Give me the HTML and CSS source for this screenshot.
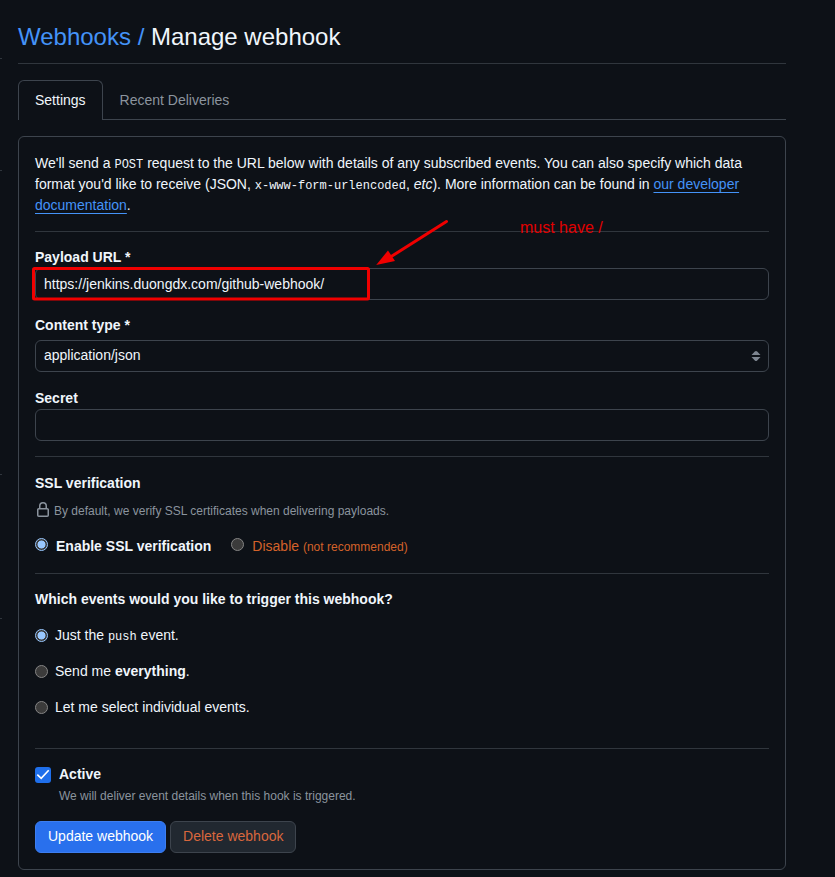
FILE: index.html
```html
<!DOCTYPE html>
<html lang="en">
<head>
<meta charset="utf-8">
<title>Manage webhook</title>
<link rel="stylesheet" href="styles.css">
</head>
<body>
<div class="nav-dividers"><i></i><i></i><i></i><i></i></div>
<main class="page">
  <h1 class="title"><a href="#">Webhooks /</a> Manage webhook</h1>
  <nav class="tabs"><a class="tab active" href="#">Settings</a><a class="tab" href="#">Recent Deliveries</a></nav>
  <form class="box">
    <p class="intro">We'll send a <code>POST</code> request to the URL below with details of any subscribed events. You can also specify which data format you'd like to receive (JSON, <code>x-www-form-urlencoded</code>, <em>etc</em>). More information can be found in <a href="#">our developer documentation</a>.</p>
    <hr>
    <div class="field">
      <label class="label" for="url">Payload URL *</label>
      <input class="control" id="url" type="text" value="https://jenkins.duongdx.com/github-webhook/">
    </div>
    <div class="field select-field">
      <label class="label">Content type *</label>
      <div class="control select"><span>application/json</span>
        <svg width="10" height="10" viewBox="0 0 10 10"><path d="M.5 4h9L6.2.5Q5 -.5 3.800.5zM.5 6h9L6.200 9.500Q5 10.500 3.800 9.500z"/></svg>
      </div>
    </div>
    <div class="field">
      <label class="label" for="secret">Secret</label>
      <input class="control" id="secret" type="text">
    </div>
    <hr>
    <section class="ssl">
      <h2 class="label">SSL verification</h2>
      <p class="note lock-note"><svg width="16" height="16" viewBox="0 0 16 16"><path d="M4 4a4 4 0 0 1 8 0v2h.25c.966 0 1.750.784 1.750 1.750v5.500A1.750 1.750 0 0 1 12.250 15h-8.500A1.750 1.750 0 0 1 2 13.250v-5.500C2 6.784 2.784 6 3.750 6H4Zm8.250 3.500h-8.500a.25.25 0 0 0-.25.25v5.500c0 .138.112.25.25.25h8.500a.25.25 0 0 0 .25-.25v-5.500a.25.25 0 0 0-.25-.25ZM10.500 6V4a2.500 2.500 0 1 0-5 0v2Z"/></svg><span>By default, we verify SSL certificates when delivering payloads.</span></p>
      <div class="ssl-options">
        <span class="radio on"></span><b>Enable SSL verification</b>
        <span class="radio off-gap"></span><span class="danger">Disable <small>(not recommended)</small></span>
      </div>
    </section>
    <hr>
    <section class="events">
      <h2 class="label">Which events would you like to trigger this webhook?</h2>
      <div class="event"><span class="radio on"></span><span>Just the <code>push</code> event.</span></div>
      <div class="event"><span class="radio"></span><span>Send me <b>everything</b>.</span></div>
      <div class="event"><span class="radio"></span><span>Let me select individual events.</span></div>
    </section>
    <hr>
    <section class="active-row">
      <span class="checkbox"><svg width="16" height="16" viewBox="0 0 16 16"><path d="M2.300 7.700 6.200 11.400 13.700 3.300"/></svg></span>
      <div><div class="label">Active</div><p class="note">We will deliver event details when this hook is triggered.</p></div>
    </section>
    <div class="buttons"><button type="button" class="btn primary">Update webhook</button><button type="button" class="btn delete">Delete webhook</button></div>
  </form>
</main>
<svg class="annotation" width="430" height="90" viewBox="0 0 430 90">
  <rect x="3.500" y="53.500" width="335" height="30.500" rx="1"/>
  <path d="M416.500 6.500 362 41"/>
  <path class="head" d="M346.200 50 358 35.500 365 46z"/>
</svg>
<span class="annotation-text">must have /</span>
</body>
</html>
```
FILE: styles.css
```css
* { box-sizing: border-box; }
body {
  margin: 0;
  height: 877px;
  overflow: hidden;
  position: relative;
  background: #0d1117;
  color: #f0f6fc;
  font: 14px/21px "Liberation Sans", Arial, sans-serif;
}
a { color: #4493f8; text-decoration: none; }
p, h1, h2 { margin: 0; }
code { font: 12px "Liberation Mono", monospace; }
hr { height: 1px; border: 0; margin: 15px 0; background: #30363d; }

.page { width: 768px; margin-left: 18px; padding-top: 19px; }
.title {
  font-size: 24px;
  line-height: 36px;
  font-weight: 400;
  padding-bottom: 8px;
  border-bottom: 1px solid #30363d;
  margin-bottom: 16px;
}
.tabs { display: flex; height: 40px; border-bottom: 1px solid #3d444d; margin-bottom: 16px; }
.tab { height: 40px; padding: 10px 17px; color: #8b949e; }
.tab.active {
  padding: 9px 16px;
  border: 1px solid #3d444d;
  border-bottom: 0;
  border-radius: 6px 6px 0 0;
  background: #0d1117;
  color: #f0f6fc;
}
.box { height: 734px; padding: 16px; border: 1px solid #3d444d; border-radius: 6px; }
.intro a { text-decoration: underline; text-underline-offset: 3px; }

.field { margin-bottom: 15px; }
.label { display: block; font-size: 14px; line-height: 21px; font-weight: 700; }
.control {
  display: block;
  width: 100%;
  height: 32px;
  padding: 5px 8px;
  border: 1px solid #3d444d;
  border-radius: 6px;
  background: #0d1117;
  color: #f0f6fc;
  font: 14px/20px "Liberation Sans", Arial, sans-serif;
}
.select-field { margin-bottom: 16px; }
.select { margin-top: 4px; display: flex; justify-content: space-between; padding: 4px 7px 4px 8px; }
.select svg { margin-top: 6px; fill: #7d8590; }

.note { font-size: 12px; line-height: 18px; color: #8b949e; }
.ssl { padding-top: 1px; }
.lock-note { display: flex; margin-top: 7px; }
.lock-note svg { margin-top: 1px; fill: #8b949e; }
.lock-note span { margin: 1px 0 0 3px; }
.ssl-options { display: flex; height: 22px; margin-top: 15px; padding-top: 1px; margin-bottom: 16px; }
.radio {
  flex: none;
  width: 13px;
  height: 13px;
  border: 1px solid #858585;
  border-radius: 50%;
  background: #3b3b3b;
}
.radio.on { border-color: #99c8ff; background: radial-gradient(circle, #99c8ff 0 3.700px, #3b3b3b 4.300px); }
.ssl-options .radio { margin: 2px 8px 0 0; }
.ssl-options .off-gap { margin-left: 20px; }
.danger { color: #d4622a; }
.danger small { font-size: 12px; }
.event { display: flex; height: 21px; margin-top: 15px; }
.event .radio { margin: 4px 7px 0 0; }
.events { height: 144px; }

.active-row { display: flex; height: 57px; }
.checkbox { width: 16px; height: 16px; margin: 3px 8px 0 0; border-radius: 3px; background: #1f6feb; }
.checkbox svg { display: block; fill: none; stroke: #fff; stroke-width: 1.600; }
.active-row .note { margin-top: 2px; }
.buttons { display: flex; gap: 4px; }
.btn {
  height: 32px;
  padding: 0 12px 2px;
  border: 1px solid #3d444d;
  border-radius: 6px;
  font: 14px/20px "Liberation Sans", Arial, sans-serif;
}
.primary { background: #2970ed; border-color: #3d7ef0; color: #fff; }
.delete { background: #212830; color: #d9673d; }

.nav-dividers i { position: absolute; left: 0; width: 2px; height: 1px; background: #30363d; }
.nav-dividers i:nth-child(1) { top: 58px; }
.nav-dividers i:nth-child(2) { top: 170px; }
.nav-dividers i:nth-child(3) { top: 474px; }
.nav-dividers i:nth-child(4) { top: 618px; }
.annotation { position: absolute; left: 30px; top: 215px; pointer-events: none; fill: none; stroke: #f00000; stroke-width: 3; stroke-linecap: round; }
.annotation .head { fill: #f00000; stroke: none; }
.annotation-text { position: absolute; left: 520px; top: 217px; color: #e00000; font-size: 16px; }
```
